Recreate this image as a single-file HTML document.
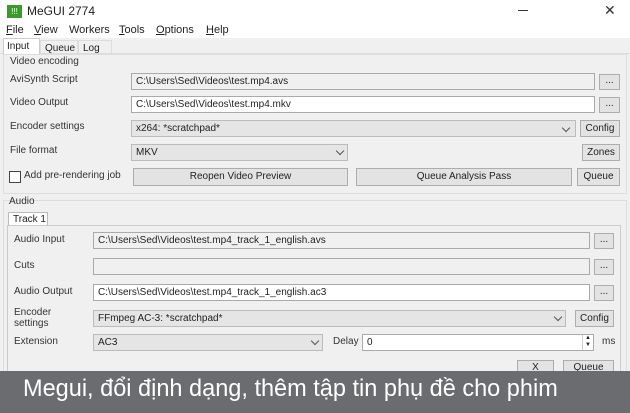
<!DOCTYPE html>
<html><head><meta charset="utf-8"><style>
*{box-sizing:border-box;margin:0;padding:0}
body{width:630px;height:413px;overflow:hidden;background:#f0f0f0;font-family:"Liberation Sans",sans-serif;font-size:10px;color:#222;position:relative}
.a{position:absolute;white-space:nowrap}
.tb{border:1px solid #aaa;background:#f0f0f0}
.w{background:#fff}
.cb{background:#e5e5e5;border:1px solid #bbb}
.btn{position:absolute;background:#e3e3e3;border:1px solid #adadad;text-align:center;font-size:10px;color:#222}
.lbl{position:absolute;white-space:nowrap;font-size:10px;color:#333}
.txt{position:absolute;font-size:10px;color:#222;padding-left:4px;white-space:nowrap;overflow:hidden}
.chev{position:absolute;width:6px;height:6px;border-right:1px solid #555;border-bottom:1px solid #555;transform:rotate(45deg)}
</style></head><body>
<div class="a" style="left:0;top:0;width:630px;height:38px;background:#fff"></div>
<div class="a" style="left:7px;top:5px;width:15px;height:13px;background:#3a9a2a;color:#fff;font-size:8px;line-height:13px;text-align:center">!!!</div>
<div class="a" style="left:27px;top:4px;font-size:12px;color:#222">MeGUI 2774</div>
<div class="a" style="left:518px;top:10px;width:10px;height:1px;background:#333"></div>
<div class="a" style="left:604px;top:2px;font-size:14px;color:#333">✕</div>
<div class="a" style="left:6px;top:24px;font-size:11px"><u>F</u>ile</div>
<div class="a" style="left:34px;top:24px;font-size:11px"><u>V</u>iew</div>
<div class="a" style="left:69px;top:24px;font-size:11px">Workers</div>
<div class="a" style="left:119px;top:24px;font-size:11px"><u>T</u>ools</div>
<div class="a" style="left:156px;top:24px;font-size:11px"><u>O</u>ptions</div>
<div class="a" style="left:206px;top:24px;font-size:11px"><u>H</u>elp</div>
<div class="a" style="left:0;top:38px;width:630px;height:16px;background:#f0f0f0;border-bottom:1px solid #ddd"></div>
<div class="a" style="left:3px;top:38px;width:37px;height:17px;background:#fff;border:1px solid #ccc;border-bottom:none;font-size:10px;padding:2px 0 0 3px">Input</div>
<div class="a" style="left:40px;top:40px;width:38px;height:14px;border:1px solid #ddd;font-size:10px;padding:2px 0 0 4px">Queue</div>
<div class="a" style="left:78px;top:40px;width:34px;height:14px;border:1px solid #ddd;font-size:10px;padding:2px 0 0 4px">Log</div>
<div class="a" style="left:3px;top:54px;width:624px;height:140px;border:1px solid #ddd;background:#f0f0f0"></div>
<div class="lbl" style="left:10px;top:56px">Video encoding</div>
<div class="lbl" style="left:10px;top:74px">AviSynth Script</div>
<div class="txt tb" style="left:131px;top:73px;width:464px;height:17px;line-height:15px">C:\Users\Sed\Videos\test.mp4.avs</div>
<div class="btn" style="left:599px;top:74px;width:21px;height:16px;line-height:12px">...</div>
<div class="lbl" style="left:10px;top:97px">Video Output</div>
<div class="txt tb w" style="left:131px;top:96px;width:464px;height:17px;line-height:15px">C:\Users\Sed\Videos\test.mp4.mkv</div>
<div class="btn" style="left:599px;top:97px;width:21px;height:16px;line-height:12px">...</div>
<div class="lbl" style="left:10px;top:121px">Encoder settings</div>
<div class="txt cb" style="left:131px;top:120px;width:445px;height:17px;line-height:15px">x264: *scratchpad*</div>
<div class="chev" style="left:563px;top:125px"></div>
<div class="btn" style="left:580px;top:120px;width:40px;height:17px;line-height:15px">Config</div>
<div class="lbl" style="left:10px;top:145px">File format</div>
<div class="txt cb" style="left:131px;top:144px;width:217px;height:17px;line-height:15px">MKV</div>
<div class="chev" style="left:337px;top:148px"></div>
<div class="btn" style="left:582px;top:144px;width:38px;height:17px;line-height:15px">Zones</div>
<div class="a" style="left:9px;top:171px;width:12px;height:12px;border:1px solid #444;background:#fff"></div>
<div class="lbl" style="left:24px;top:170px">Add pre-rendering job</div>
<div class="btn" style="left:133px;top:168px;width:215px;height:18px;line-height:16px">Reopen Video Preview</div>
<div class="btn" style="left:356px;top:168px;width:216px;height:18px;line-height:16px">Queue Analysis Pass</div>
<div class="btn" style="left:577px;top:168px;width:43px;height:18px;line-height:16px">Queue</div>
<div class="a" style="left:3px;top:200px;width:624px;height:180px;border:1px solid #ddd"></div>
<div class="lbl" style="left:9px;top:196px">Audio</div>
<div class="a" style="left:8px;top:212px;width:40px;height:14px;background:#fff;border:1px solid #bbb;border-bottom:none;font-size:10px;padding:1px 0 0 4px">Track 1</div>
<div class="a" style="left:7px;top:225px;width:614px;height:160px;border:1px solid #ccc;background:#f0f0f0"></div>
<div class="lbl" style="left:14px;top:234px">Audio Input</div>
<div class="txt tb" style="left:93px;top:232px;width:497px;height:17px;line-height:15px">C:\Users\Sed\Videos\test.mp4_track_1_english.avs</div>
<div class="btn" style="left:594px;top:233px;width:20px;height:16px;line-height:12px">...</div>
<div class="lbl" style="left:14px;top:260px">Cuts</div>
<div class="txt tb" style="left:93px;top:258px;width:497px;height:17px"></div>
<div class="btn" style="left:594px;top:259px;width:20px;height:16px;line-height:12px">...</div>
<div class="lbl" style="left:14px;top:286px">Audio Output</div>
<div class="txt tb w" style="left:93px;top:284px;width:497px;height:17px;line-height:15px">C:\Users\Sed\Videos\test.mp4_track_1_english.ac3</div>
<div class="btn" style="left:594px;top:285px;width:20px;height:16px;line-height:12px">...</div>
<div class="lbl" style="left:14px;top:307px;line-height:11px">Encoder<br>settings</div>
<div class="txt cb" style="left:93px;top:310px;width:473px;height:17px;line-height:15px">FFmpeg AC-3: *scratchpad*</div>
<div class="chev" style="left:555px;top:314px"></div>
<div class="btn" style="left:575px;top:310px;width:39px;height:17px;line-height:15px">Config</div>
<div class="lbl" style="left:14px;top:336px">Extension</div>
<div class="txt cb" style="left:93px;top:334px;width:230px;height:17px;line-height:15px">AC3</div>
<div class="chev" style="left:312px;top:338px"></div>
<div class="lbl" style="left:333px;top:336px">Delay</div>
<div class="txt tb w" style="left:362px;top:334px;width:232px;height:17px;line-height:15px">0</div>
<div class="a" style="left:582px;top:335px;width:11px;height:15px;border-left:1px solid #ccc;font-size:6px;line-height:7px;text-align:center">▲<br>▼</div>
<div class="lbl" style="left:602px;top:336px">ms</div>
<div class="btn" style="left:517px;top:360px;width:37px;height:16px;line-height:14px">X</div>
<div class="btn" style="left:563px;top:360px;width:51px;height:16px;line-height:14px">Queue</div>
<div class="a" style="left:0;top:371px;width:630px;height:42px;background:#6b6c6f"></div>
<div class="a" style="left:23px;top:375px;font-size:24px;color:#fff;transform:scaleX(0.98);transform-origin:0 0">Megui, đổi định dạng, thêm tập tin phụ đề cho phim</div>
</body></html>
